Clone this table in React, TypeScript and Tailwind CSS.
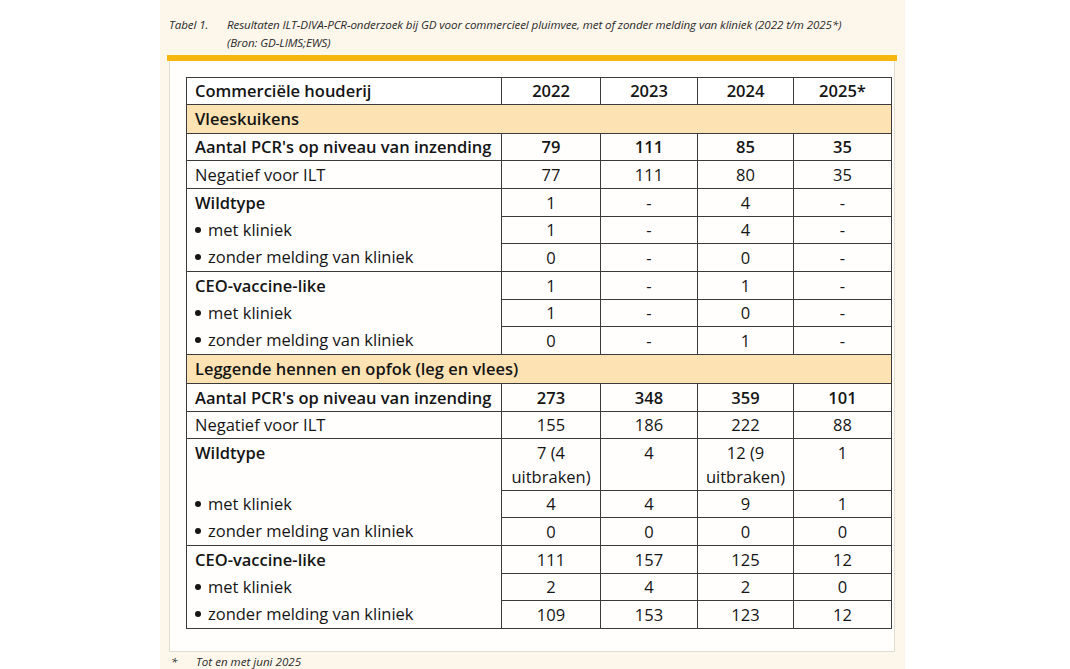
import React from "react";

type Row =
  | { kind: "section"; label: string; h: string }
  | {
      kind: "data";
      label: string;
      values: React.ReactNode[];
      h: string;
      bold?: boolean;
      labelBold?: boolean;
      bullet?: boolean;
      cont?: boolean; // continues the group above: no line in label column
      tall?: boolean;
    };

const rows: Row[] = [
  { kind: "section", label: "Vleeskuikens", h: "h-[29px]" },
  { kind: "data", label: "Aantal PCR's op niveau van inzending", values: ["79", "111", "85", "35"], bold: true, h: "h-[27px]" },
  { kind: "data", label: "Negatief voor ILT", values: ["77", "111", "80", "35"], h: "h-[28px]" },
  { kind: "data", label: "Wildtype", values: ["1", "-", "4", "-"], labelBold: true, h: "h-[28px]" },
  { kind: "data", label: "met kliniek", values: ["1", "-", "4", "-"], bullet: true, cont: true, h: "h-[27px]" },
  { kind: "data", label: "zonder melding van kliniek", values: ["0", "-", "0", "-"], bullet: true, cont: true, h: "h-[28px]" },
  { kind: "data", label: "CEO-vaccine-like", values: ["1", "-", "1", "-"], labelBold: true, h: "h-[28px]" },
  { kind: "data", label: "met kliniek", values: ["1", "-", "0", "-"], bullet: true, cont: true, h: "h-[27px]" },
  { kind: "data", label: "zonder melding van kliniek", values: ["0", "-", "1", "-"], bullet: true, cont: true, h: "h-[28px]" },
  { kind: "section", label: "Leggende hennen en opfok (leg en vlees)", h: "h-[29px]" },
  { kind: "data", label: "Aantal PCR's op niveau van inzending", values: ["273", "348", "359", "101"], bold: true, h: "h-[28px]" },
  { kind: "data", label: "Negatief voor ILT", values: ["155", "186", "222", "88"], h: "h-[27px]" },
  {
    kind: "data",
    label: "Wildtype",
    values: [
      <>7 (4<br />uitbraken)</>,
      "4",
      <>12 (9<br />uitbraken)</>,
      "1",
    ],
    labelBold: true,
    tall: true,
    h: "h-[52px]",
  },
  { kind: "data", label: "met kliniek", values: ["4", "4", "9", "1"], bullet: true, cont: true, h: "h-[27px]" },
  { kind: "data", label: "zonder melding van kliniek", values: ["0", "0", "0", "0"], bullet: true, cont: true, h: "h-[28px]" },
  { kind: "data", label: "CEO-vaccine-like", values: ["111", "157", "125", "12"], labelBold: true, h: "h-[28px]" },
  { kind: "data", label: "met kliniek", values: ["2", "4", "2", "0"], bullet: true, cont: true, h: "h-[27px]" },
  { kind: "data", label: "zonder melding van kliniek", values: ["109", "153", "123", "12"], bullet: true, cont: true, h: "h-[28px]" },
];

const years = ["2022", "2023", "2024", "2025*"];
const colWidths = ["w-[99px]", "w-[97px]", "w-[96px]", "w-[98px]"];

const line = "border-[#3a3a3a]";

export default function App() {
  return (
    <div className="min-h-[669px] bg-white font-['Open_Sans',sans-serif] text-[#151515]">
      <div className="ml-[160px] w-[745px] pt-[14px] bg-[#fdf6ea] min-h-[655px]">
        {/* caption */}
        <div className="flex px-[9px] pt-[2px] text-[11.6px] italic leading-[18px] text-[#2a2a2a] tracking-[-0.1px]">
          <div className="w-[58px] shrink-0">Tabel 1.</div>
          <div>
            <p>
              Resultaten ILT-DIVA-PCR-onderzoek bij GD voor commercieel pluimvee, met of zonder melding van kliniek
              (2022 t/m 2025*)
            </p>
            <p>(Bron: GD-LIMS;EWS)</p>
          </div>
        </div>

        <div className="ml-[7px] mt-[3px] w-[730px] h-[6px] bg-[#f5b70d]" />

        <div className="ml-[9px] w-[726px] border border-t-0 border-[#e2ddd3] bg-[#fffefc] pl-[16px] pr-[3px] pt-[16px] pb-[22px]">
          <table className={`w-[705px] table-fixed border-separate border-spacing-0 border-r border-b ${line} text-[16.5px]`}>
            <colgroup>
              <col className="w-[315px]" />
              {colWidths.map((w, i) => (
                <col key={i} className={w} />
              ))}
            </colgroup>
            <thead>
              <tr className="h-[27px]">
                <th className={`border-l border-t ${line} px-2 py-0 leading-6 text-left font-semibold bg-white`}>
                  Commerciële houderij
                </th>
                {years.map((y) => (
                  <th key={y} className={`border-l border-t ${line} py-0 leading-6 text-center font-semibold bg-white`}>
                    {y}
                  </th>
                ))}
              </tr>
            </thead>
            <tbody>
              {rows.map((r, i) =>
                r.kind === "section" ? (
                  <tr key={i} className={r.h}>
                    <td colSpan={5} className={`border-l border-t ${line} px-2 py-0 leading-6 font-semibold bg-[#fde3b3]`}>
                      {r.label}
                    </td>
                  </tr>
                ) : (
                  <tr key={i} className={`${r.h} ${r.tall ? "align-top" : "align-middle"}`}>
                    <td
                      className={`border-l ${line} px-2 leading-6 ${r.cont ? "border-t-0" : "border-t"} ${
                        r.tall ? "pt-[2px]" : "py-0"
                      } ${r.bold || r.labelBold ? "font-semibold" : ""}`}
                    >
                      {r.bullet ? (
                        <span className="flex items-center gap-[7px]">
                          <span className="inline-block size-[6px] rounded-full bg-[#151515]" />
                          {r.label}
                        </span>
                      ) : (
                        r.label
                      )}
                    </td>
                    {r.values.map((v, j) => (
                      <td
                        key={j}
                        className={`border-l border-t ${line} leading-6 text-center ${r.bold ? "font-semibold" : ""} ${
                          r.tall ? "pt-[2px]" : "py-0"
                        }`}
                      >
                        {v}
                      </td>
                    ))}
                  </tr>
                )
              )}
            </tbody>
          </table>
        </div>

        <div className="flex px-[11px] pt-[1px] text-[11.6px] italic leading-[18px] text-[#2a2a2a]">
          <div className="w-[25px] shrink-0">*</div>
          <div>Tot en met juni 2025</div>
        </div>
      </div>
    </div>
  );
}
